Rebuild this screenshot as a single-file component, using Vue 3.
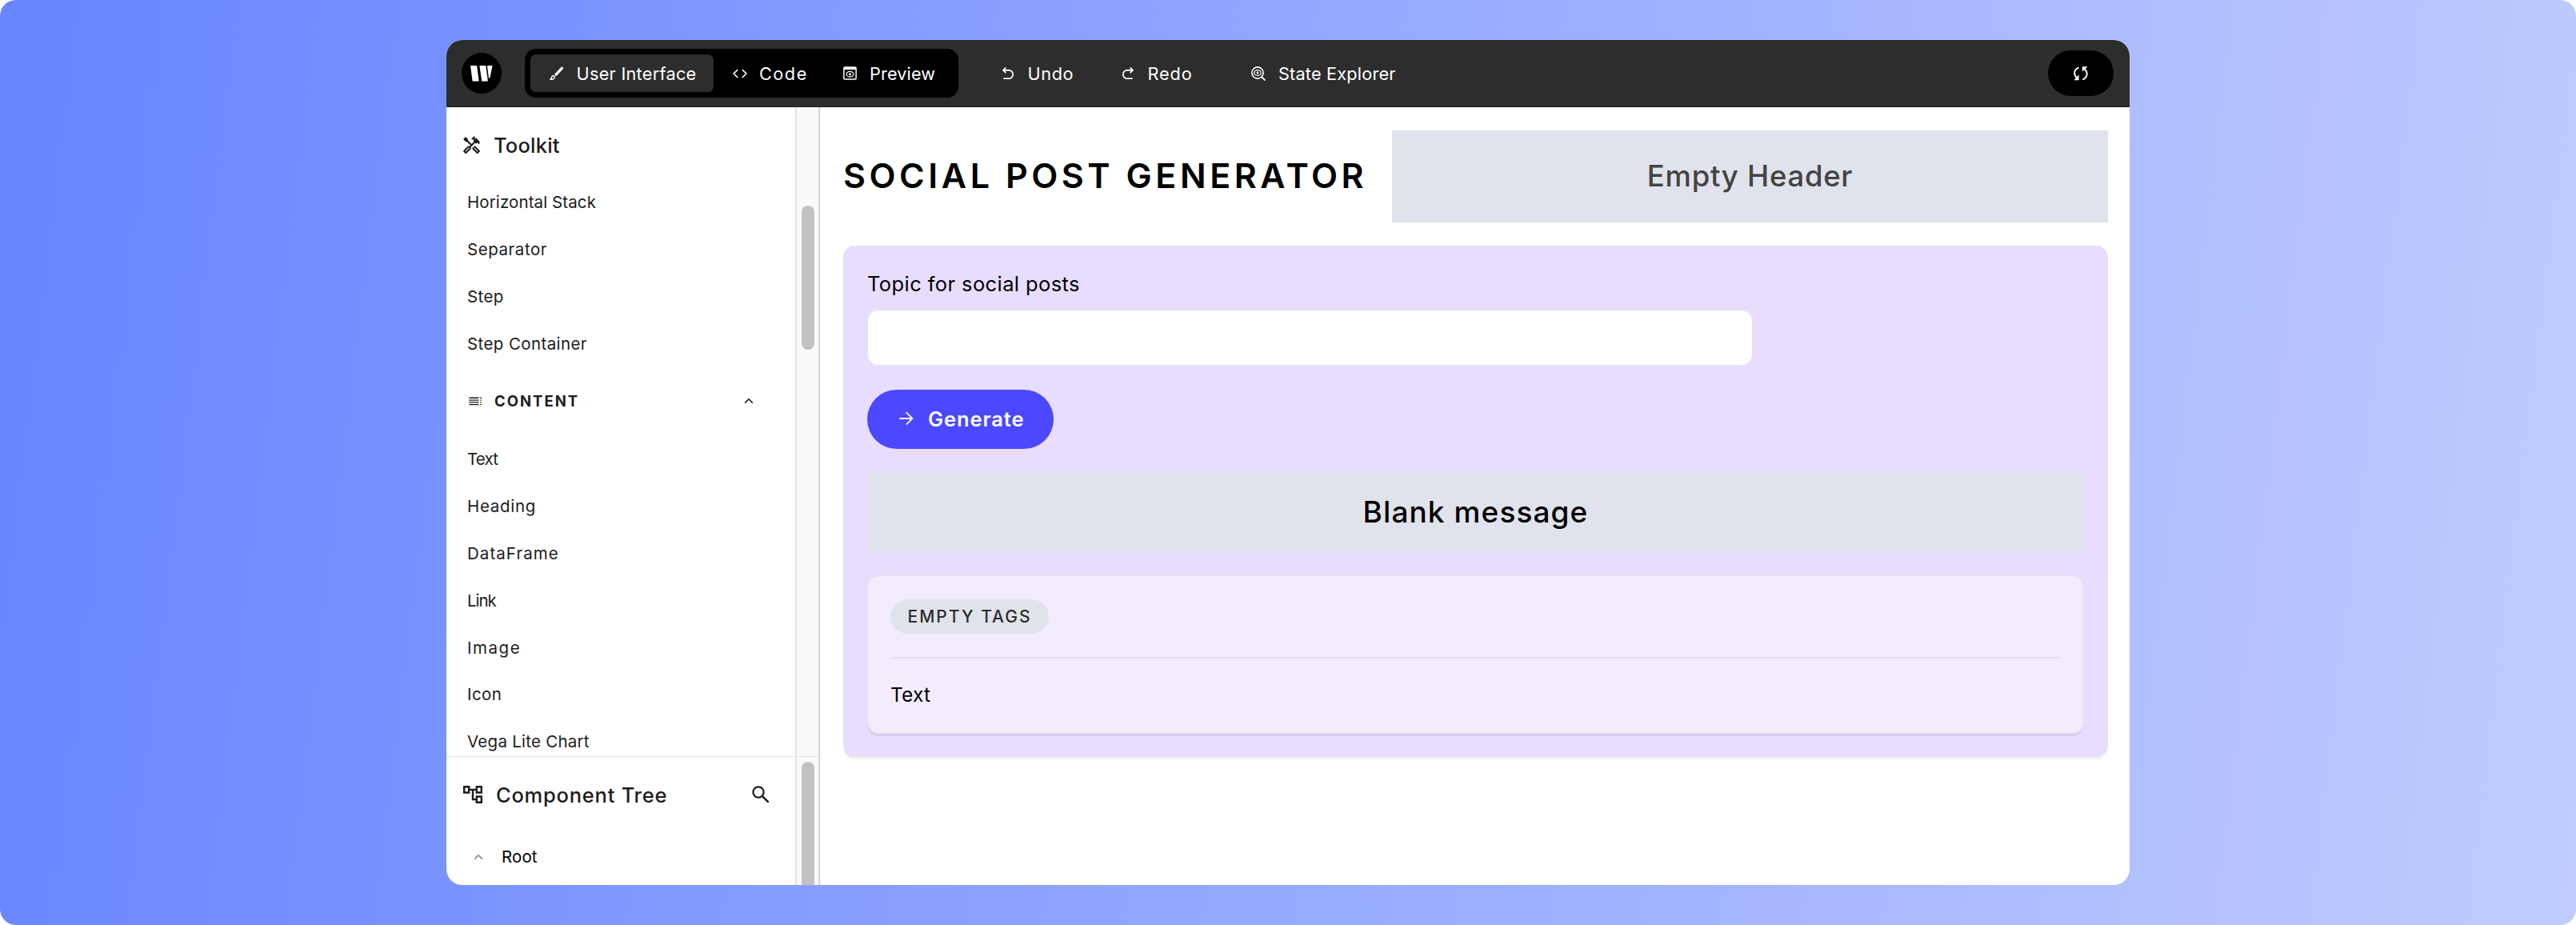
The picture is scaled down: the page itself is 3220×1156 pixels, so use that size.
<script setup>
const layoutItems = [
  { label: 'Horizontal Stack', track: 0.1 },
  { label: 'Separator', track: 0.55 },
  { label: 'Step', track: 0.4 },
  { label: 'Step Container', track: 0.4 },
]
const contentItems = [
  { label: 'Text', track: -0.8 },
  { label: 'Heading', track: 0.7 },
  { label: 'DataFrame', track: 1.06 },
  { label: 'Link', track: -1.05 },
  { label: 'Image', track: 1.55 },
  { label: 'Icon', track: 0.4 },
  { label: 'Vega Lite Chart', track: 0.25 },
]
const tracking = (px) => ({ letterSpacing: px + 'px' })
</script>

<template>
  <div class="stage">
    <div class="window">
      <header class="topbar">
        <div class="logo">
          <svg width="28" height="20" viewBox="0 0 28 20" fill="#fff">
            <path d="M0 0h8.100l2.600 19.500H2.600zM11.400 0h8l2.500 19.500h-7.700zM21 0H27.500L24.400 15.500H22.900z" />
          </svg>
        </div>
        <nav class="modes">
          <div class="mode active">
            <svg width="18" height="18" viewBox="0 0 18 18" fill="none" stroke="#fff">
              <path d="M15.500 2.200L8 10.200" stroke-width="3.200" stroke-linecap="round" />
              <path d="M1.200 16c1.500-.6.900-3.600 2.600-4.200 1.500-.5 2.800.9 2.200 2.400-.6 1.600-2.800 2.400-4.800 1.800z" stroke-width="1.500" />
            </svg>
            <span :style="tracking(0.28)">User Interface</span>
          </div>
          <div class="mode code">
            <svg width="18" height="12" viewBox="0 0 18 12" fill="none" stroke="#fff" stroke-width="1.700">
              <path d="M6.200 1L1.200 6l5 5M11.800 1l5 5-5 5" />
            </svg>
            <span :style="tracking(1.5)">Code</span>
          </div>
          <div class="mode preview">
            <svg width="17" height="17" viewBox="0 0 17 17" fill="none" stroke="#fff" stroke-width="1.500">
              <rect x=".9" y="1" width="15.200" height="15" rx="1.200" />
              <path d="M1 2.500h15" stroke-width="3" />
              <ellipse cx="8.500" cy="9.700" rx="4.300" ry="3.300" stroke-width="1.300" />
              <circle cx="8.500" cy="9.700" r="1.500" fill="#fff" stroke="none" />
            </svg>
            <span :style="tracking(0.13)">Preview</span>
          </div>
        </nav>
        <div class="action undo">
          <svg width="14" height="15" viewBox="2 1 19 20" fill="#fff" stroke="#fff" stroke-width=".5" preserveAspectRatio="none">
            <path d="M5.828 7l2.536 2.536L6.950 10.950 2 6l4.950-4.950 1.414 1.414L5.828 5H13a8 8 0 1 1 0 16H4v-2h9a6 6 0 1 0 0-12H5.828z" />
          </svg>
          <span :style="tracking(0.63)">Undo</span>
        </div>
        <div class="action redo">
          <svg width="14" height="15" viewBox="2 1 19 20" fill="#fff" stroke="#fff" stroke-width=".5" preserveAspectRatio="none">
            <path transform="matrix(-1 0 0 1 23 0)" d="M5.828 7l2.536 2.536L6.950 10.950 2 6l4.950-4.950 1.414 1.414L5.828 5H13a8 8 0 1 1 0 16H4v-2h9a6 6 0 1 0 0-12H5.828z" />
          </svg>
          <span :style="tracking(0.87)">Redo</span>
        </div>
        <div class="action state">
          <svg width="18" height="18" viewBox="0 0 18 18" fill="none" stroke="#fff" stroke-width="1.600">
            <circle cx="8" cy="8" r="7.100" />
            <path d="M13 13l4.400 4.400" stroke-width="1.900" />
            <ellipse cx="8" cy="8" rx="4.300" ry="3.300" stroke-width="1.300" />
            <circle cx="8" cy="8" r="1.400" fill="#fff" stroke="none" />
          </svg>
          <span :style="tracking(0.19)">State Explorer</span>
        </div>
        <div class="sync">
          <svg width="18" height="18" viewBox="0 0 18 18">
            <g fill="none" stroke="#fff" stroke-width="1.900">
              <path d="M6.500 1.400C-.2 4-.2 11 4.200 14.500" />
              <path d="M11.200 16.400C18 14 18 6.500 13.600 3.200" />
            </g>
            <path d="M6.600 10.300v7H.3zM10.900.3h6.700l-6.700 6.300z" fill="#fff" />
          </svg>
        </div>
      </header>

      <div class="body">
        <aside class="sidebar">
          <section class="pane toolkit">
            <div class="pane-main">
              <div class="pane-head toolkit-head">
                <svg width="21" height="22" viewBox="1.900 1 20.200 21" fill="#1c1c1c" preserveAspectRatio="none">
                  <path d="M21.670 18.170l-5.300-5.300h-.99l-2.540 2.540v.99l5.300 5.300c.39.39 1.020.39 1.410 0l2.120-2.120c.39-.38.39-1.020 0-1.410zm-2.830 1.420l-4.240-4.240.71-.71 4.240 4.240-.71.71z" />
                  <path d="M17.340 10.190l1.410-1.410 2.120 2.120c1.170-1.170 1.170-3.070 0-4.240l-3.540-3.540-1.410 1.410V1.710l-.7-.71-3.540 3.540.71.71h2.830l-1.410 1.410 1.060 1.060-2.890 2.890-4.130-4.130V5.060L4.830 2.040 2 4.870 5.030 7.900h1.410l4.130 4.130-.85.85H7.600l-5.300 5.300c-.39.39-.39 1.020 0 1.410l2.120 2.120c.39.39 1.020.39 1.410 0l5.300-5.300v-2.120l5.150-5.150 1.050 1.050zm-7.980 5.150l-4.240 4.240-.71-.71 4.240-4.240.71.71z" />
                </svg>
                <h2 :style="tracking(0.2)">Toolkit</h2>
              </div>
              <div v-for="item in layoutItems" :key="item.label" class="tool" :style="tracking(item.track)">{{ item.label }}</div>
              <div class="category">
                <svg width="17" height="11" viewBox="0 0 17 11" fill="#1c1c1c">
                  <path d="M.3.600h12.200v1.300H.3zM.3 3.400h12.200v1.300H.3zM.3 6.200h12.200v1.300H.3zM.3 9h12.200v1.300H.3z" />
                  <path d="M14.300.600h1.600v1.300h-1.600zM14.300 3.400h1.600v1.300h-1.600zM14.300 6.200h1.600v1.300h-1.600zM14.300 9h1.600v1.300h-1.600z" />
                </svg>
                <h3>CONTENT</h3>
                <svg class="chevron" width="12" height="8" viewBox="0 0 12 8" fill="none" stroke="#1c1c1c" stroke-width="1.600">
                  <path d="M1.200 6.600L6 1.800l4.800 4.800" />
                </svg>
              </div>
              <div v-for="item in contentItems" :key="item.label" class="tool" :style="tracking(item.track)">{{ item.label }}</div>
            </div>
            <div class="track"><div class="thumb"></div></div>
          </section>
          <section class="pane tree">
            <div class="pane-main">
              <div class="pane-head tree-head">
                <svg width="24" height="22" viewBox="2 3 20 18" fill="#1c1c1c" preserveAspectRatio="none">
                  <path d="M22 11V3h-7v3H9V3H2v8h7V8h2v10h4v3h7v-8h-7v3h-2V8h2v3h7zM7 9H4V5h3v4zm10 6h3v4h-3v-4zm0-10h3v4h-3V5z" />
                </svg>
                <h2 :style="tracking(0.76)">Component Tree</h2>
                <svg class="search" width="22" height="22" viewBox="0 0 22 22" fill="none" stroke="#1c1c1c">
                  <circle cx="8" cy="8" r="6.600" stroke-width="2.200" />
                  <path d="M12.800 12.800l7.800 7.800" stroke-width="2.600" />
                </svg>
              </div>
              <div class="node">
                <svg width="12" height="8" viewBox="0 0 12 8" fill="none" stroke="#858585" stroke-width="1.600">
                  <path d="M1.200 6.600L6 1.800l4.800 4.800" />
                </svg>
                <span :style="tracking(0.1)">Root</span>
              </div>
            </div>
            <div class="track"><div class="thumb"></div></div>
          </section>
        </aside>

        <main class="canvas">
          <div class="page-head">
            <h1>SOCIAL POST GENERATOR</h1>
            <div class="empty-header">Empty Header</div>
          </div>
          <section class="card">
            <label class="topic">Topic for social posts</label>
            <div class="input"></div>
            <div class="generate">
              <svg width="18" height="18" viewBox="0 0 18 18" fill="none" stroke="#fff" stroke-width="1.800">
                <path d="M.3 9h16M8.800 1.300L16.500 9l-7.700 7.700" />
              </svg>
              <span>Generate</span>
            </div>
            <div class="message">Blank message</div>
            <div class="result">
              <div class="tag">EMPTY TAGS</div>
              <div class="rule"></div>
              <p class="text">Text</p>
            </div>
          </section>
        </main>
      </div>
    </div>
  </div>
</template>

<style>
body {
  margin: 0;
  background: #fff;
}
</style>

<style scoped>
* {
  box-sizing: border-box;
}
h1,
h2,
h3,
p {
  margin: 0;
}
svg {
  display: block;
  flex: none;
}
.stage {
  width: 3220px;
  height: 1156px;
  padding: 50px 558px;
  border-radius: 20px;
  background: linear-gradient(97deg, #6986ff 0%, #6986ff 2%, #c0ccff 100%);
  font-family: Inter, "Liberation Sans", sans-serif;
  white-space: nowrap;
  overflow: hidden;
}
.window {
  width: 2104px;
  height: 1056px;
  border-radius: 20px;
  background: #fff;
  overflow: hidden;
}

.topbar {
  display: flex;
  align-items: center;
  height: 84px;
  padding: 0 20px 0 19px;
  background: #2d2d2d;
  border-bottom: 1px solid #1f181b;
  color: #fff;
  font-size: 21.7px;
}
.logo {
  display: flex;
  align-items: center;
  justify-content: center;
  width: 50px;
  height: 51px;
  border-radius: 50%;
  background: #000;
}
.modes {
  display: flex;
  align-items: center;
  width: 542px;
  height: 61px;
  margin-left: 29px;
  padding: 0 7px;
  border-radius: 14px;
  background: #000;
}
.mode {
  display: flex;
  align-items: center;
  height: 47px;
  border-radius: 7px;
}
.active {
  width: 229px;
  padding-left: 24px;
  gap: 15.5px;
  background: #2d2d2d;
}
.code {
  width: 138px;
  padding-left: 23.5px;
  gap: 15.5px;
}
.preview {
  width: 161px;
  padding-left: 23.5px;
  gap: 16.5px;
}
.action {
  display: flex;
  align-items: center;
  gap: 18px;
}
.undo {
  width: 150px;
  margin-left: 54.5px;
}
.redo {
  width: 161.5px;
}
.state {
  gap: 16px;
}
.sync {
  display: flex;
  align-items: center;
  justify-content: center;
  width: 82px;
  height: 57px;
  margin-left: auto;
  border-radius: 29px;
  background: #000;
}

.body {
  display: flex;
  height: 972px;
}
.sidebar {
  display: flex;
  flex-direction: column;
  width: 467px;
  border-right: 1px solid #c4c4c4;
  color: #1c1c1c;
}
.pane {
  display: flex;
  overflow: hidden;
}
.toolkit {
  height: 812px;
  border-bottom: 1px solid #e2e2e6;
}
.tree {
  flex: 1;
}
.pane-main {
  width: 436px;
}
.track {
  width: 30px;
  padding-left: 6px;
  border-left: 2px solid #e3e3e3;
  border-right: 2px solid #ececec;
  background: #f9f9f9;
}
.thumb {
  width: 16px;
  height: 180px;
  margin-top: 122.7px;
  border-radius: 8px;
  background: #c1c1c1;
}
.tree .thumb {
  height: 200px;
  margin-top: 6px;
}
.pane-head {
  display: flex;
  align-items: center;
  padding-left: 21px;
}
.pane-head h2 {
  font-size: 25.5px;
  font-weight: 500;
}
.toolkit-head {
  height: 89.3px;
  padding-top: 5px;
  gap: 17px;
}
.tree-head {
  height: 94px;
  padding-right: 32px;
  gap: 17px;
}
.search {
  margin-left: auto;
}
.tool {
  height: 58.83px;
  padding-left: 26px;
  font-size: 20.5px;
  line-height: 60.6px;
}
.category {
  display: flex;
  align-items: center;
  height: 85.7px;
  padding: 0 52px 0 28px;
}
.category h3 {
  margin-left: 15px;
  font-size: 18.5px;
  font-weight: 700;
  letter-spacing: 2px;
}
.chevron {
  margin-left: auto;
}
.node {
  display: flex;
  align-items: center;
  height: 61px;
  padding-left: 34px;
  gap: 23px;
  color: #000;
  font-size: 20.5px;
}

.canvas {
  flex: 1;
  padding: 29px 27px 0 29px;
}
.page-head {
  display: flex;
  height: 115px;
}
h1 {
  width: 686px;
  font-size: 43px;
  font-weight: 600;
  line-height: 113.5px;
  letter-spacing: 4.55px;
}
.empty-header {
  flex: 1;
  background: #e0e3eb;
  color: #444;
  font-size: 36.5px;
  font-weight: 500;
  line-height: 114px;
  letter-spacing: 0.72px;
  text-align: center;
}
.card {
  height: 639px;
  margin-top: 29px;
  padding: 27px 29px 0;
  border: 1px solid #e0e3eb;
  border-radius: 14px;
  background: #e8ddff;
  box-shadow: 0 4px 1px -1px rgba(0, 0, 0, 0.06);
}
.topic {
  display: block;
  font-size: 25.5px;
  line-height: 40px;
  letter-spacing: 0.4px;
}
.input {
  width: 1107px;
  height: 70px;
  margin-top: 12px;
  border: 1px solid #e0e3eb;
  border-radius: 14px;
  background: #fff;
}
.generate {
  display: flex;
  align-items: center;
  width: 233px;
  height: 74px;
  margin-top: 30px;
  padding: 0 0 2px 39.5px;
  gap: 18.5px;
  border-radius: 37px;
  background: #4b48ff;
  color: #fff;
  font-size: 25.5px;
  font-weight: 600;
  letter-spacing: 0.9px;
}
.message {
  height: 100px;
  margin-top: 29px;
  background: #e0e3eb;
  font-size: 37px;
  font-weight: 500;
  line-height: 99px;
  letter-spacing: 1.1px;
  text-align: center;
}
.result {
  height: 198px;
  margin-top: 29px;
  padding: 29px 28px 0;
  border: 1px solid #e0e3eb;
  border-radius: 14px;
  background: #f3ecfd;
  box-shadow: 0 4px 1px -1px rgba(60, 30, 110, 0.09);
}
.tag {
  width: 198px;
  height: 43px;
  padding-left: 21.5px;
  border-radius: 22px;
  background: #e0e3ea;
  color: #2c2c2c;
  font-size: 21px;
  font-weight: 500;
  line-height: 43px;
  letter-spacing: 2.02px;
}
.rule {
  height: 2px;
  margin-top: 29px;
  background: #dfe3ea;
}
.text {
  margin-top: 25px;
  font-size: 24.5px;
  line-height: 40px;
  letter-spacing: 0.17px;
}
</style>
